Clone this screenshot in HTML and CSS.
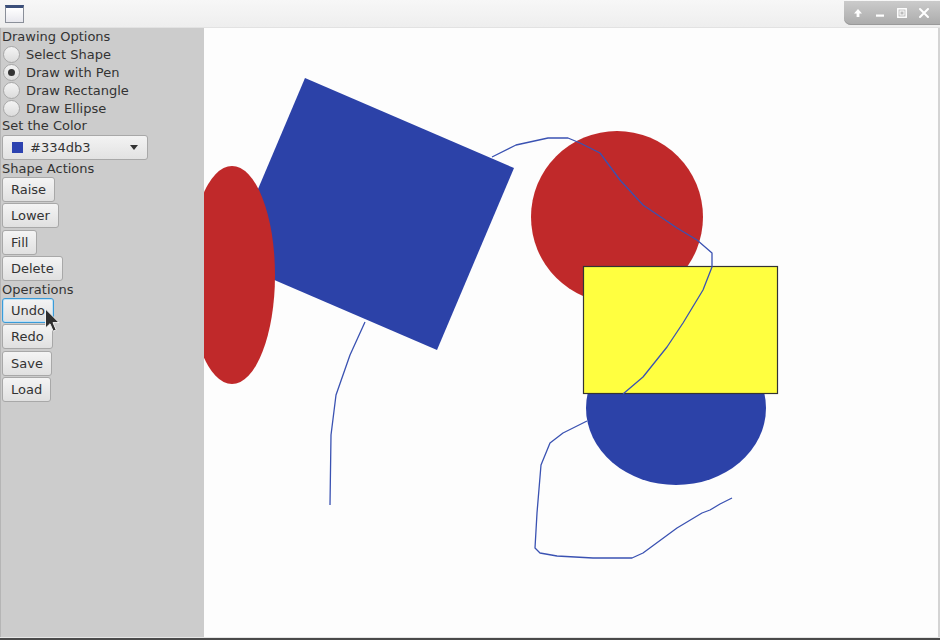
FILE: index.html
```html
<!DOCTYPE html>
<html>
<head>
<meta charset="utf-8">
<title>Drawing</title>
<link rel="stylesheet" href="styles.css">
</head>
<body>
<div class="window">
  <header class="titlebar">
    <span class="app-icon"></span>
    <div class="controls">
      <svg class="ctl" width="14" height="14" viewBox="0 0 14 14"><path d="M7 3 L11 7.5 H8.4 V11 H5.6 V7.5 H3 Z" fill="#fff"/></svg>
      <svg class="ctl" width="14" height="14" viewBox="0 0 14 14"><rect x="3" y="8.5" width="8" height="2.2" fill="#fff"/></svg>
      <svg class="ctl" width="14" height="14" viewBox="0 0 14 14"><rect x="2.8" y="2.8" width="8.4" height="8.4" fill="none" stroke="#fff" stroke-width="1.5"/><rect x="5" y="5" width="4" height="4" fill="none" stroke="#fff" stroke-width="1"/></svg>
      <svg class="ctl" width="14" height="14" viewBox="0 0 14 14"><path d="M3 3 L11 11 M11 3 L3 11" stroke="#fff" stroke-width="2" stroke-linecap="round"/></svg>
    </div>
  </header>
  <div class="content">
    <aside class="sidebar">
      <div class="label">Drawing Options</div>
      <div class="radio"><span class="dot"></span>Select Shape</div>
      <div class="radio"><span class="dot on"></span>Draw with Pen</div>
      <div class="radio"><span class="dot"></span>Draw Rectangle</div>
      <div class="radio"><span class="dot"></span>Draw Ellipse</div>
      <div class="label">Set the Color</div>
      <div class="combo"><span class="swatch"></span><span class="combo-text">#334db3</span><span class="arrow"></span></div>
      <div class="label label-tight">Shape Actions</div>
      <button class="btn">Raise</button>
      <button class="btn">Lower</button>
      <button class="btn">Fill</button>
      <button class="btn">Delete</button>
      <div class="label label-ops">Operations</div>
      <button class="btn focus">Undo</button>
      <button class="btn">Redo</button>
      <button class="btn">Save</button>
      <button class="btn">Load</button>
    </aside>
    <main class="stage">
      <svg class="canvas" width="734" height="609" viewBox="204 28 734 609">
        <polygon points="305,78 514,168 437,350 228,260" fill="#2c42a8"/>
        <ellipse cx="232" cy="275" rx="43" ry="109" fill="#c0292a"/>
        <circle cx="617" cy="217" r="86" fill="#c0292a"/>
        <ellipse cx="676" cy="408" rx="90" ry="77" fill="#2c42a8"/>
        <rect x="583.5" y="266.5" width="194" height="127" fill="#ffff40" stroke="#333" stroke-width="1.2"/>
        <polyline class="pen" points="330,505 331,435 336,395 350,355 365,322"/>
        <polyline class="pen" points="492,157 516,145 548,138 568,138 580,143 600,153 620,180 643,205 677,228 697,240 712,253 712,267 703,290 683,323 667,347 643,377 623,394"/>
        <polyline class="pen" points="587,421 563,433 550,443 541,465 537,513 535,548 540,553 557,556 593,558 632,558 643,553 677,528 702,513 710,510 720,504 732,498"/>
      </svg>
    </main>
  </div>
  <div class="bottom-edge"></div>
  <svg class="cursor" width="17" height="26" viewBox="0 0 17 26"><path d="M1.5 1 L1.5 20 L6 15.8 L9.2 23.2 L12.2 21.9 L9 14.6 L15 14.6 Z" fill="#2e2e2e" stroke="#f0f0f0" stroke-width="1" stroke-linejoin="round"/></svg>
</div>
</body>
</html>
```

FILE: styles.css
```css
html, body {
  margin: 0;
  padding: 0;
  width: 940px;
  height: 640px;
  overflow: hidden;
  font-family: "DejaVu Sans", sans-serif;
}

.window {
  position: relative;
  width: 940px;
  height: 640px;
  display: flex;
  flex-direction: column;
  background: #f4f4f4;
}

.titlebar {
  height: 27px;
  border-bottom: 1px solid #e2e2e2;
  background: linear-gradient(#f7f7f7, #eeeeee);
  display: flex;
  align-items: flex-start;
  flex-shrink: 0;
}

.app-icon {
  width: 17px;
  height: 14px;
  margin: 5px 0 0 5px;
  border: 1px solid #8a8f99;
  border-top: 3px solid #3b4f7a;
  background: linear-gradient(#ffffff, #e8e8ee);
  box-sizing: content-box;
}

.controls {
  margin-left: auto;
  margin-top: 1px;
  width: 96px;
  height: 24px;
  border-radius: 0 0 0 7px;
  background: linear-gradient(#cbcbcb, #ababab);
  box-shadow: inset 0 -1px 0 #9a9a9a;
  display: flex;
  align-items: center;
  padding-left: 7px;
  gap: 8px;
  box-sizing: border-box;
}

.ctl {
  display: block;
}

.content {
  display: flex;
  height: 609px;
  flex-shrink: 0;
}

.sidebar {
  width: 202px;
  padding-left: 2px;
  background: #cccccc;
  display: flex;
  flex-direction: column;
  align-items: flex-start;
  color: #333333;
  font-size: 13px;
  box-shadow: inset 1px 0 0 #b5b5b5;
}

.label {
  height: 18px;
  line-height: 18px;
  white-space: nowrap;
}

.sidebar > .label:first-child {
  height: 17px;
  line-height: 18px;
}

.label-tight {
  height: 17px;
  line-height: 17px;
}

.label-ops {
  height: 16px;
  line-height: 16px;
}

.radio {
  height: 18px;
  display: flex;
  align-items: center;
  white-space: nowrap;
}

.dot {
  width: 15px;
  height: 15px;
  border: 1px solid #a8a8a8;
  border-radius: 50%;
  background: linear-gradient(#f4f4f4, #dcdcdc);
  margin: 0 6px 0 1px;
  display: flex;
  align-items: center;
  justify-content: center;
  box-sizing: content-box;
}

.dot.on::after {
  content: "";
  width: 7px;
  height: 7px;
  border-radius: 50%;
  background: #333333;
}

.combo {
  width: 146px;
  height: 25px;
  box-sizing: border-box;
  border: 1px solid #a8a8a8;
  border-radius: 3px;
  background: linear-gradient(#f3f3f3, #e2e2e2);
  display: flex;
  align-items: center;
  padding-left: 9px;
}

.swatch {
  width: 11px;
  height: 11px;
  background: #2c42b0;
  margin-right: 7px;
}

.combo-text {
  flex: 1;
  font-size: 13px;
  color: #333;
}

.arrow {
  width: 0;
  height: 0;
  border-left: 4px solid transparent;
  border-right: 4px solid transparent;
  border-top: 5px solid #333;
  margin-right: 9px;
}

.btn {
  font-family: "DejaVu Sans", sans-serif;
  font-size: 13px;
  color: #333333;
  height: 25px;
  padding: 0 8px;
  margin: 0 0 1.3px 0;
  border: 1px solid #a8a8a8;
  border-radius: 3px;
  background: linear-gradient(#f4f4f4, #e0e0e0);
  line-height: 23px;
  box-sizing: border-box;
}

.btn.focus {
  border-color: #3a9bd8;
  box-shadow: inset 0 0 0 1px #bfe0f5;
}

.stage {
  flex: 1;
  display: flex;
  background: #fdfdfd;
  border-right: 2px solid #d4d4d4;
}

.canvas {
  display: block;
  background: #fdfdfd;
  flex-shrink: 0;
}

.pen {
  fill: none;
  stroke: #3a52b2;
  stroke-width: 1.3;
  stroke-linejoin: round;
}

.bottom-edge {
  height: 3px;
  background: #4a4a4a;
  border-top: 1px solid #e6e6e6;
  box-sizing: border-box;
}

.cursor {
  position: absolute;
  left: 44px;
  top: 308px;
}
```
